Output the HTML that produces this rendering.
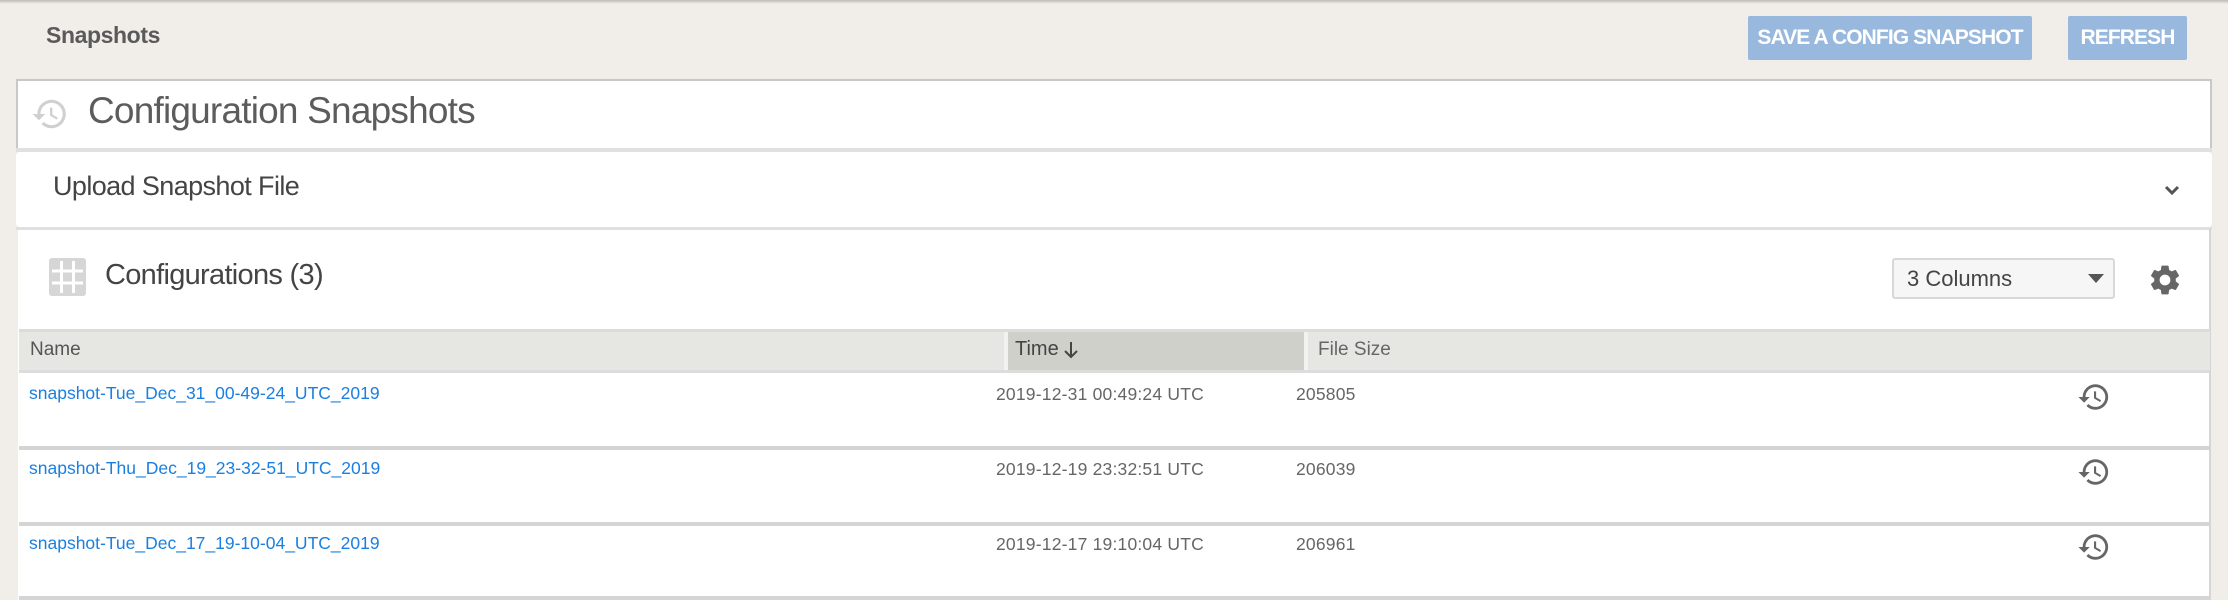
<!DOCTYPE html>
<html><head><meta charset="utf-8"><style>
*{box-sizing:border-box;margin:0;padding:0}
body{width:2228px;height:600px;background:#f1eee9;font-family:"Liberation Sans",sans-serif;position:relative;overflow:hidden}
.abs{position:absolute}
.topshadow{left:0;top:0;width:2228px;height:4px;background:linear-gradient(#bdbab5,#f1eee9)}
.btn{background:#98b8de;color:#fff;font-weight:bold;font-size:21px;letter-spacing:-0.9px;display:flex;align-items:center;justify-content:center;border-radius:2px}
.sec{background:#fff;left:16px;width:2196px}
.t{white-space:nowrap;color:#555}
.link{color:#1a7fe0;font-size:17.5px;letter-spacing:0}
.cell{color:#666;font-size:17.5px;letter-spacing:0.2px}
.sep{left:19px;width:2191px;height:4px;background:#d5d5d5}
</style></head><body>
<div class="abs topshadow"></div>
<div class="abs t" style="left:46px;top:22px;font-size:23px;font-weight:bold;color:#5a5a5a;letter-spacing:-0.4px">Snapshots</div>
<div class="abs btn" style="left:1748px;top:16px;width:284px;height:44px">SAVE A CONFIG SNAPSHOT</div>
<div class="abs btn" style="left:2068px;top:16px;width:119px;height:44px">REFRESH</div>

<div class="abs sec" style="top:79px;height:70px;border:2px solid #c8c8c8;border-bottom:none"></div>
<svg class="abs" style="left:30px;top:95px" width="40" height="38" viewBox="0 0 24 24"><path fill="#d0d0d0" d="M13 3a9 9 0 0 0-9 9H1l3.89 3.89.07.14L9 12H6c0-3.87 3.13-7 7-7s7 3.13 7 7-3.13 7-7 7c-1.93 0-3.68-.79-4.94-2.06l-1.42 1.42A8.954 8.954 0 0 0 13 21a9 9 0 0 0 0-18zm-1 5v5l4.28 2.54.72-1.210-3.5-2.08V8H12z"/></svg>
<div class="abs t" style="left:88px;top:90px;font-size:37px;color:#5c5c5c;letter-spacing:-0.8px">Configuration Snapshots</div>
<div class="abs" style="left:16px;top:148px;width:2196px;height:4px;background:#e0e0e0"></div>

<div class="abs sec" style="top:152px;height:75px;border-radius:4px"></div>
<div class="abs t" style="left:53px;top:171px;font-size:27px;color:#444;letter-spacing:-0.6px">Upload Snapshot File</div>
<svg class="abs" style="left:2163px;top:183px" width="18" height="14" viewBox="0 0 18 14"><path d="M3 4l6 6 6-6" stroke="#555" stroke-width="3" fill="none"/></svg>
<div class="abs" style="left:16px;top:227px;width:2196px;height:3px;background:#e0e0e0"></div>

<div class="abs sec" style="left:18px;width:2191px;top:230px;height:370px"></div>
<div class="abs" style="left:2209px;top:229px;width:2px;height:371px;background:#d5d5d5"></div>
<svg class="abs" style="left:49px;top:258px" width="37" height="38" viewBox="0 0 37 38"><rect x="0" y="0" width="37" height="38" rx="3" fill="#d6d6d6"/><g fill="#fff"><rect x="11" y="3" width="3" height="32"/><rect x="23" y="3" width="3" height="32"/><rect x="3" y="11.5" width="31" height="3"/><rect x="3" y="23.5" width="31" height="3"/></g></svg>
<div class="abs t" style="left:105px;top:259px;font-size:29px;color:#444;letter-spacing:-0.7px">Configurations (3)</div>
<div class="abs" style="left:1892px;top:258px;width:223px;height:41px;background:#f6f6f6;border:2px solid #d8d8d8;border-radius:3px"></div>
<div class="abs t" style="left:1907px;top:266px;font-size:22px;color:#444">3 Columns</div>
<svg class="abs" style="left:2088px;top:274px" width="16" height="10"><path d="M0 0h16L8 9z" fill="#555"/></svg>
<svg class="abs" style="left:2147px;top:262px" width="36" height="36" viewBox="0 0 24 24"><path fill="#666" d="M19.14 12.94c.04-.3.06-.61.06-.94 0-.32-.02-.64-.07-.94l2.03-1.580a.49.49 0 0 0 .12-.61l-1.92-3.32a.488.488 0 0 0-.59-.22l-2.39.96c-.5-.38-1.03-.7-1.62-.94l-.36-2.54a.484.484 0 0 0-.48-.41h-3.84c-.24 0-.43.17-.47.41l-.36 2.54c-.59.24-1.13.57-1.62.94l-2.39-.96c-.22-.08-.47 0-.59.22L2.74 8.87c-.12.21-.08.47.12.61l2.03 1.58c-.05.3-.09.63-.09.94s.02.64.07.94l-2.03 1.58a.49.49 0 0 0-.12.61l1.92 3.32c.12.22.37.29.59.22l2.39-.96c.5.38 1.03.7 1.62.94l.36 2.54c.05.24.24.41.48.41h3.84c.24 0 .44-.17.47-.41l.36-2.54c.59-.24 1.13-.56 1.62-.94l2.39.96c.22.08.47 0 .59-.22l1.92-3.32c.12-.22.07-.47-.12-.61l-2.01-1.58zM12 15.6c-1.98 0-3.6-1.62-3.6-3.6s1.62-3.6 3.6-3.6 3.6 1.62 3.6 3.6-1.62 3.6-3.6 3.6z"/></svg>

<div class="abs" style="left:19px;top:329px;width:2191px;height:3px;background:#dcdcdc"></div>
<div class="abs" style="left:19px;top:332px;width:2191px;height:38px;background:#e6e6e2"></div>
<div class="abs" style="left:1004px;top:332px;width:4px;height:38px;background:#f2f2f0"></div>
<div class="abs" style="left:1008px;top:332px;width:296px;height:38px;background:#d0d0cb"></div>
<div class="abs" style="left:1304px;top:332px;width:4px;height:38px;background:#f2f2f0"></div>
<div class="abs" style="left:19px;top:370px;width:2191px;height:3px;background:#dcdcdc"></div>
<div class="abs t" style="left:30px;top:339px;font-size:19px;color:#555">Name</div>
<div class="abs t" style="left:1015px;top:338px;font-size:20px;color:#444">Time</div>
<svg class="abs" style="left:1063px;top:341px" width="16" height="18" viewBox="0 0 16 18"><path d="M8 1v15M2 10l6 6 6-6" stroke="#444" stroke-width="2" fill="none"/></svg>
<div class="abs t" style="left:1318px;top:339px;font-size:19px;color:#666">File Size</div>

<div class="abs link t" style="left:29px;top:383px">snapshot-Tue_Dec_31_00-49-24_UTC_2019</div>
<div class="abs cell t" style="left:996px;top:384px">2019-12-31 00:49:24 UTC</div>
<div class="abs cell t" style="left:1296px;top:384px">205805</div>
<div class="abs sep" style="top:446px"></div>
<div class="abs link t" style="left:29px;top:458px">snapshot-Thu_Dec_19_23-32-51_UTC_2019</div>
<div class="abs cell t" style="left:996px;top:459px">2019-12-19 23:32:51 UTC</div>
<div class="abs cell t" style="left:1296px;top:459px">206039</div>
<div class="abs sep" style="top:522px"></div>
<div class="abs link t" style="left:29px;top:533px">snapshot-Tue_Dec_17_19-10-04_UTC_2019</div>
<div class="abs cell t" style="left:996px;top:534px">2019-12-17 19:10:04 UTC</div>
<div class="abs cell t" style="left:1296px;top:534px">206961</div>
<div class="abs sep" style="top:596px"></div>

<svg class="abs" style="left:2077px;top:380px" width="34" height="34" viewBox="0 0 24 24"><path fill="#666" d="M13 3a9 9 0 0 0-9 9H1l3.89 3.89.07.14L9 12H6c0-3.87 3.13-7 7-7s7 3.13 7 7-3.13 7-7 7c-1.93 0-3.68-.79-4.94-2.060l-1.42 1.42A8.954 8.954 0 0 0 13 21a9 9 0 0 0 0-18zm-1 5v5l4.28 2.54.72-1.21-3.5-2.08V8H12z"/></svg>
<svg class="abs" style="left:2077px;top:455px" width="34" height="34" viewBox="0 0 24 24"><path fill="#666" d="M13 3a9 9 0 0 0-9 9H1l3.89 3.89.07.14L9 12H6c0-3.87 3.13-7 7-7s7 3.13 7 7-3.13 7-7 7c-1.93 0-3.68-.79-4.94-2.06l-1.42 1.42A8.954 8.954 0 0 0 13 21a9 9 0 0 0 0-18zm-1 5v5l4.28 2.54.72-1.21-3.5-2.08V8H12z"/></svg>
<svg class="abs" style="left:2077px;top:530px" width="34" height="34" viewBox="0 0 24 24"><path fill="#666" d="M13 3a9 9 0 0 0-9 9H1l3.89 3.89.07.14L9 12H6c0-3.870 3.13-7 7-7s7 3.13 7 7-3.13 7-7 7c-1.93 0-3.68-.79-4.94-2.06l-1.42 1.42A8.954 8.954 0 0 0 13 21a9 9 0 0 0 0-18zm-1 5v5l4.28 2.54.72-1.21-3.5-2.08V8H12z"/></svg>
</body></html>
